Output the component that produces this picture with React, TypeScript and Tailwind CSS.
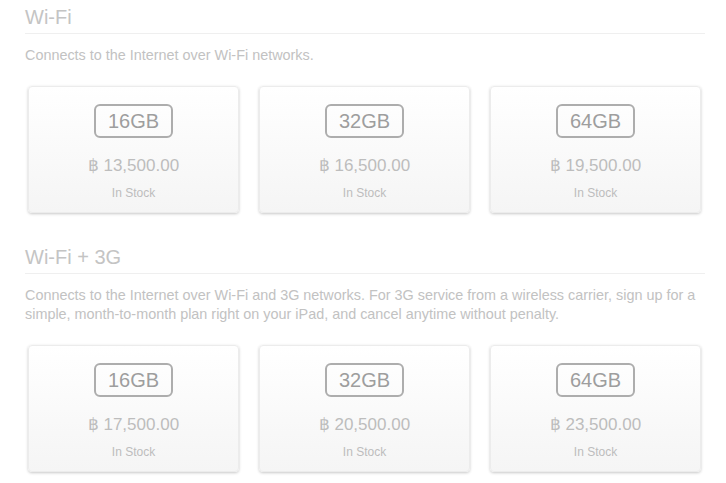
import React from "react";

type Opt = { size: string; price: string };

const sections: { title: string; desc: string; opts: Opt[] }[] = [
  {
    title: "Wi-Fi",
    desc: "Connects to the Internet over Wi-Fi networks.",
    opts: [
      { size: "16GB", price: "13,500.00" },
      { size: "32GB", price: "16,500.00" },
      { size: "64GB", price: "19,500.00" },
    ],
  },
  {
    title: "Wi-Fi + 3G",
    desc: "Connects to the Internet over Wi-Fi and 3G networks. For 3G service from a wireless carrier, sign up for a simple, month-to-month plan right on your iPad, and cancel anytime without penalty.",
    opts: [
      { size: "16GB", price: "17,500.00" },
      { size: "32GB", price: "20,500.00" },
      { size: "64GB", price: "23,500.00" },
    ],
  },
];

function Card({ o }: { o: Opt }) {
  return (
    <div className="w-[211px] h-[127px] rounded-[4px] border border-[#ececec] bg-gradient-to-b from-white to-[#f5f5f5] shadow-[0_1px_3px_rgba(0,0,0,0.22)] flex flex-col items-center pt-[17px]">
      <div className="w-[79px] h-[34px] rounded-[6px] border-2 border-[#adadad] flex items-center justify-center text-[20px] leading-[30px] text-[#9e9e9e]">
        {o.size}
      </div>
      <div className="mt-[18px] text-[17px] leading-[20px] text-[#bdbdbd]">
        ฿ {o.price}
      </div>
      <div className="mt-[9px] text-[12px] leading-[16px] text-[#bdbdbd]">In Stock</div>
    </div>
  );
}

export default function App() {
  return (
    <div
      className="bg-white w-[726px] h-[483px] overflow-hidden pl-[25px] pr-[21px] pt-[6px]"
      style={{ fontFamily: '"Liberation Sans", "DejaVu Sans", Arial, sans-serif' }}
    >
      {sections.map((s, i) => (
        <div key={s.title} className={i > 0 ? "mt-[33px]" : ""}>
          <h2 className="text-[20px] leading-[23px] text-[#c4c4c4] pb-[4px] border-b border-[#efefef]">
            {s.title}
          </h2>
          <p className="mt-[12px] text-[14.4px] leading-[19.5px] text-[#c2c2c2]">{s.desc}</p>
          <div className="mt-[20px] pl-[3px] flex gap-[20px]">
            {s.opts.map((o) => (
              <Card key={o.size} o={o} />
            ))}
          </div>
        </div>
      ))}
    </div>
  );
}
